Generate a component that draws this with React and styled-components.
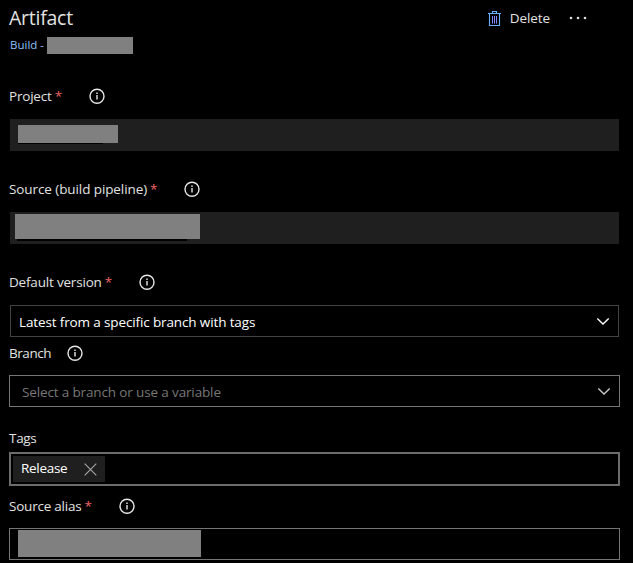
import React from "react";
import styled, { createGlobalStyle } from "styled-components";

const GlobalStyle = createGlobalStyle`
  body {
    margin: 0;
    background: #000;
    overflow: hidden;
  }
  * { box-sizing: border-box; }
`;

const Panel = styled.main`
  width: 633px;
  height: 563px;
  padding: 8px 13px 0 9px;
  overflow: hidden;
  background: #000;
  color: #e2e2e2;
  font-family: "Open Sans", "Noto Sans", sans-serif;
  font-size: 13.5px;
`;

const Text = styled.span`
  flex: none;
  white-space: pre;
  letter-spacing: ${(p) => p.$spacing || 0}px;
`;

const Header = styled.header`
  display: flex;
  justify-content: space-between;
  height: 20px;
`;

const Title = styled.h1`
  margin: 0;
  font-size: 19.5px;
  font-weight: 400;
  line-height: 20px;
  letter-spacing: -0.25px;
`;

const Actions = styled.div`
  display: flex;
  align-items: center;
  margin-right: 33px;
`;

const DeleteButton = styled.button`
  display: flex;
  align-items: center;
  gap: 9px;
  padding: 0;
  border: 0;
  background: none;
  color: inherit;
  font: inherit;
  line-height: 20px;
`;

const MoreButton = styled.button`
  display: flex;
  margin-left: 19px;
  padding: 0;
  border: 0;
  background: none;
  color: #dedede;
`;

const Subtitle = styled.div`
  display: flex;
  align-items: center;
  gap: 3px;
  height: 17px;
  margin-top: 9px;
  padding-left: 1px;
  color: #8dc0fa;
  font-size: 11.5px;
  line-height: 15px;
`;

const SubtitleText = styled(Text)`
  height: 17px;
`;

const Redaction = styled.span`
  flex: none;
  width: ${(p) => p.$w}px;
  height: ${(p) => p.$h}px;
  background: #808080;
`;

const Masked = styled.span`
  display: flex;
  flex-direction: column;
`;

const Underline = styled.span`
  width: ${(p) => p.$w}px;
  height: ${(p) => p.$h}px;
  margin-left: ${(p) => p.$inset || 0}px;
  background: #000;
`;

const Label = styled.label`
  display: flex;
  align-items: center;
  height: 16px;
  margin-top: ${(p) => p.$top}px;
  line-height: 16px;
`;

const Required = styled.span`
  width: 6px;
  margin-left: 3px;
  color: #f06464;
`;

const InfoIcon = styled.svg`
  flex: none;
  width: 16px;
  height: 16px;
  margin-left: ${(p) => p.$gap}px;
`;

const Field = styled.div`
  display: flex;
  align-items: center;
  height: 32px;
  margin-top: ${(p) => p.$top}px;
  border: 1px solid #757575;
`;

const ReadOnlyField = styled(Field)`
  align-items: flex-start;
  margin-left: 1px;
  margin-right: 1px;
  padding: ${(p) => p.$pad};
  border: 0;
  background: #1f1f1f;
`;

const Select = styled(Field)`
  justify-content: space-between;
  margin-left: 1px;
  margin-right: 1px;
  padding: 1px 8px 0 8px;
  border-color: #434343;
  color: #fff;
`;

const Combo = styled(Field)`
  justify-content: space-between;
  padding: 2px 8px 0 12px;
  color: #777;
`;

const TagsField = styled(Field)`
  height: 34px;
  padding: 0 2px;
  border: 2px solid #6c6c6c;
`;

const Tag = styled.span`
  display: flex;
  align-items: center;
  justify-content: space-between;
  width: 92px;
  height: 26px;
  padding: 0 8px;
  background: #1f1f1f;
  color: #fff;
  line-height: 24px;
`;

const TagText = styled(Text)`
  height: 26px;
`;

const AliasField = styled(Field)`
  align-items: flex-start;
  padding: 1px 0 0 8px;
`;

const Info = ({ gap }) => (
  <InfoIcon $gap={gap} viewBox="0 0 16 16" fill="none">
    <circle cx="8" cy="8.2" r="7" stroke="#e8e8e8" strokeWidth="1.4" />
    <path d="M8 7v4.6M8 4.6v1.3" stroke="#e8e8e8" strokeWidth="1.4" />
  </InfoIcon>
);

const FieldLabel = ({ text, spacing, top, required, gap }) => (
  <Label $top={top}>
    <Text $spacing={spacing}>{text}</Text>
    {required && <Required>*</Required>}
    {gap !== undefined && <Info gap={gap} />}
  </Label>
);

const Chevron = ({ color }) => (
  <svg width="14" height="10" viewBox="0 0 14 10" fill="none">
    <path d="M1.3 1.5L7 7.1l5.7-5.6" stroke={color} strokeWidth="1.4" />
  </svg>
);

const Trash = () => (
  <svg width="13" height="17" viewBox="0 0 13 17" fill="none" stroke="#68b0f8">
    <path d="M0 3.5h13M4.5 3V1.5h4V3M1.5 3.5v12h10v-12" strokeWidth="1.1" />
    <path d="M4.5 6v7.5M6.5 6v7.5M8.5 6v7.5" stroke="#8585ff" strokeWidth="1" />
  </svg>
);

export default function App() {
  return (
    <Panel>
      <GlobalStyle />
      <Header>
        <Title>Artifact</Title>
        <Actions>
          <DeleteButton>
            <Trash />
            <Text $spacing={-0.1}>Delete</Text>
          </DeleteButton>
          <MoreButton aria-label="More actions">
            <svg width="18" height="4" viewBox="0 0 18 4" fill="currentColor">
              <circle cx="2" cy="2" r="1.3" />
              <circle cx="9" cy="2" r="1.3" />
              <circle cx="16" cy="2" r="1.3" />
            </svg>
          </MoreButton>
        </Actions>
      </Header>
      <Subtitle>
        <SubtitleText>Build -</SubtitleText>
        <Redaction $w={86} $h={17} />
      </Subtitle>

      <FieldLabel text="Project" spacing={-0.2} top={34} required gap={28} />
      <ReadOnlyField $top={15} $pad="6px 0 0 8px">
        <Masked>
          <Redaction $w={100} $h={18} />
          <Underline $w={85} $h={1} />
        </Masked>
      </ReadOnlyField>

      <FieldLabel text="Source (build pipeline)" spacing={-0.09} top={30} required gap={28} />
      <ReadOnlyField $top={15} $pad="2px 0 0 5px">
        <Masked>
          <Redaction $w={185} $h={25} />
          <Underline $w={170} $h={2} $inset={2} />
        </Masked>
      </ReadOnlyField>

      <FieldLabel text="Default version" spacing={-0.19} top={30} required gap={28} />
      <Select $top={15}>
        <Text $spacing={-0.13}>Latest from a specific branch with tags</Text>
        <Chevron color="#fff" />
      </Select>

      <FieldLabel text="Branch" spacing={-0.45} top={8} gap={16} />
      <Combo $top={14}>
        <Text $spacing={-0.14}>Select a branch or use a variable</Text>
        <Chevron color="#c8c8c8" />
      </Combo>

      <FieldLabel text="Tags" spacing={-0.3} top={23} />
      <TagsField $top={6}>
        <Tag>
          <TagText $spacing={-0.3}>Release</TagText>
          <svg width="13" height="13" viewBox="0 0 13 13" fill="none">
            <path d="M.7.7l11.6 11.6M12.3.7L.7 12.3" stroke="#a8a8a8" strokeWidth="1.1" />
          </svg>
        </Tag>
      </TagsField>

      <FieldLabel text="Source alias" spacing={-0.22} top={12} required gap={28} />
      <AliasField $top={14}>
        <Redaction $w={183} $h={27} />
      </AliasField>
    </Panel>
  );
}
